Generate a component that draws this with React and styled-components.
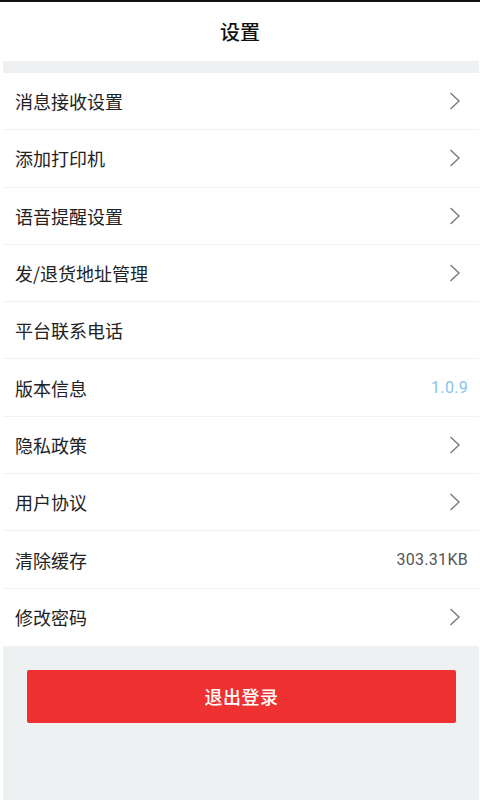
import React from "react";
import styled, { createGlobalStyle } from "styled-components";

const Global = createGlobalStyle`
  html, body { margin: 0; padding: 0; background: #ffffff; }
  body { font-family: "Noto Sans CJK SC", "Noto Sans", sans-serif; }
  * { box-sizing: border-box; }
`;

const Page = styled.div`
  width: 480px;
  height: 800px;
  display: flex;
  flex-direction: column;
  border-top: 2px solid #111;
  background: #fff;
  overflow: hidden;
`;

const Header = styled.header`
  height: 59px;
  display: flex;
  align-items: center;
  justify-content: center;
  font-size: 20px;
  color: #111;
  font-weight: 500;
`;

const Body = styled.div`
  flex: 1;
  display: flex;
  flex-direction: column;
  margin-left: 3px;
  margin-right: 1px;
  background: #eef1f2;
`;

const Gap = styled.div`
  height: 12px;
  background: #eff0f1;
`;

const List = styled.div`
  background: #fff;
  display: flex;
  flex-direction: column;
`;

const Row = styled.div`
  height: 57.3px;
  display: flex;
  align-items: center;
  justify-content: space-between;
  padding: 0 11px 0 12px;
  border-bottom: ${(p) => (p.$last ? "none" : "1.3px solid #f2f2f2")};
  font-size: 18px;
  color: #222;
`;

const Value = styled.span`
  font-size: 16px;
  color: ${(p) => (p.$accent ? "#86c3ea" : "#555")};
  font-family: Roboto, "Noto Sans", sans-serif;
  letter-spacing: 0.3px;
`;

const ChevronIcon = styled.svg`
  margin-right: 7px;
`;

const Footer = styled.div`
  flex: 1;
  padding: 24px 23px 0 24px;
`;

const LogoutButton = styled.button`
  width: 100%;
  height: 53px;
  border: none;
  border-radius: 2px;
  background: #f03131;
  color: #fff;
  font-family: "Noto Sans CJK SC", sans-serif;
  font-size: 18px;
  font-weight: 500;
  letter-spacing: 0.5px;
`;

const Chevron = () => (
  <ChevronIcon width="12" height="20" viewBox="0 0 12 20">
    <polyline points="1.5,2 10,10 1.5,18" fill="none" stroke="#7a7a7a" strokeWidth="1.4" />
  </ChevronIcon>
);

const items = [
  { label: "消息接收设置", arrow: true },
  { label: "添加打印机", arrow: true },
  { label: "语音提醒设置", arrow: true },
  { label: "发/退货地址管理", arrow: true },
  { label: "平台联系电话" },
  { label: "版本信息", value: "1.0.9", accent: true },
  { label: "隐私政策", arrow: true },
  { label: "用户协议", arrow: true },
  { label: "清除缓存", value: "303.31KB" },
  { label: "修改密码", arrow: true },
];

export default function App() {
  return (
    <>
      <Global />
      <Page>
        <Header>设置</Header>
        <Body>
          <Gap />
          <List>
            {items.map((it, i) => (
              <Row key={it.label} $last={i === items.length - 1}>
                <span>{it.label}</span>
                {it.arrow && <Chevron />}
                {it.value && <Value $accent={it.accent}>{it.value}</Value>}
              </Row>
            ))}
          </List>
          <Footer>
            <LogoutButton>退出登录</LogoutButton>
          </Footer>
        </Body>
      </Page>
    </>
  );
}
